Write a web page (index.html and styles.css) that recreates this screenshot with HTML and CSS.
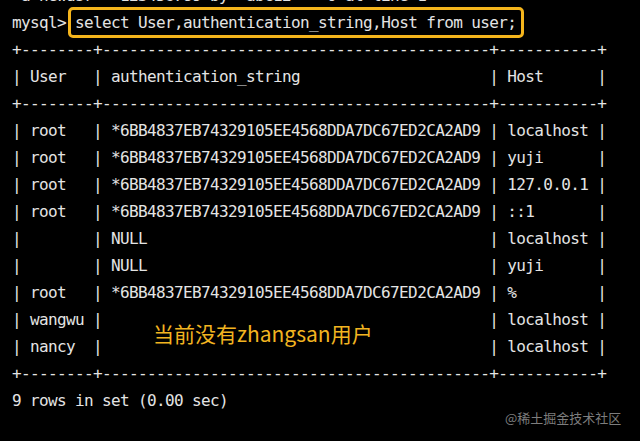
FILE: index.html
```html
<!DOCTYPE html>
<html lang="zh-CN">
<head>
<meta charset="utf-8">
<title>mysql</title>
<link rel="stylesheet" href="styles.css">
</head>
<body>
<div class="term">
<pre class="out"><span class="cut"> a newusr  '123456789'by 'abc12'   0 at line 1</span>
mysql><span class="cmd">select User,authentication_string,Host from user;</span>
+--------+-------------------------------------------+-----------+
| User   | authentication_string                     | Host      |
+--------+-------------------------------------------+-----------+
| root   | *6BB4837EB74329105EE4568DDA7DC67ED2CA2AD9 | localhost |
| root   | *6BB4837EB74329105EE4568DDA7DC67ED2CA2AD9 | yuji      |
| root   | *6BB4837EB74329105EE4568DDA7DC67ED2CA2AD9 | 127.0.0.1 |
| root   | *6BB4837EB74329105EE4568DDA7DC67ED2CA2AD9 | ::1       |
|        | NULL                                      | localhost |
|        | NULL                                      | yuji      |
| root   | *6BB4837EB74329105EE4568DDA7DC67ED2CA2AD9 | %         |
| wangwu |                                           | localhost |
| nancy  |                                           | localhost |
+--------+-------------------------------------------+-----------+
9 rows in set (0.00 sec)</pre>
<div class="note">当前没有zhangsan用户</div>
<div class="mark">@稀土掘金技术社区</div>
</div>
</body>
</html>
```
FILE: styles.css
```css
html, body {
  margin: 0;
  padding: 0;
  background: #000;
  overflow: hidden;
}
.term {
  position: relative;
  width: 640px;
  height: 441px;
  background: #000;
  overflow: hidden;
}
.out {
  margin: -18px 0 0 0;
  padding: 0 0 0 12px;
  font-family: "DejaVu Sans Mono", "Liberation Mono", monospace;
  font-size: 16px;
  letter-spacing: -0.63px;
  line-height: 27px;
  color: #e4e4e4;
}
.cmd {
  margin-left: 2px;
  padding: 3px 5px 3px 4px;
  border: 3px solid #f5b51c;
  border-radius: 5px;
}
.note {
  position: absolute;
  left: 153px;
  top: 320px;
  font-family: "Noto Sans CJK SC", "Noto Sans", sans-serif;
  font-size: 21px;
  line-height: 27px;
  color: #f2b420;
}
.mark {
  position: absolute;
  left: 505px;
  top: 409px;
  font-family: "Noto Sans CJK SC", "Noto Sans", sans-serif;
  font-size: 13px;
  line-height: 18px;
  color: #7d7d7d;
}
```
